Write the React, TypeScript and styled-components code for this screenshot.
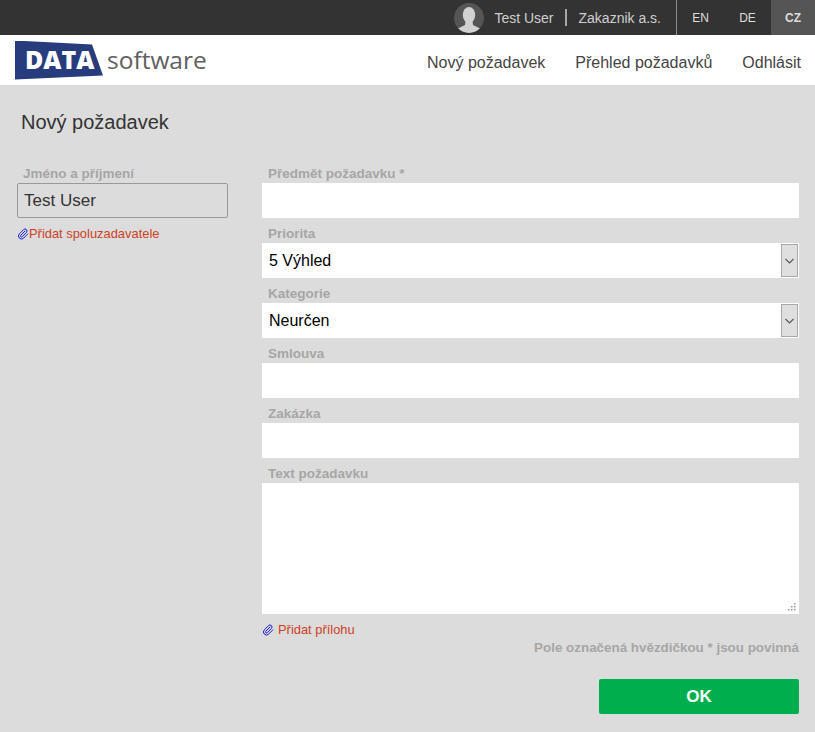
import React from "react";
import styled, { createGlobalStyle } from "styled-components";
import { Paperclip } from "lucide-react";

const GlobalStyle = createGlobalStyle`
  html, body {
    margin: 0;
    padding: 0;
    background: #dcdcdc;
    font-family: "Liberation Sans", Arial, sans-serif;
  }
  * {
    box-sizing: border-box;
  }
`;

const Page = styled.div`
  width: 815px;
  height: 732px;
  overflow: hidden;
  background: #dcdcdc;
`;

const TopBar = styled.div`
  height: 35px;
  background: #333333;
  display: flex;
  justify-content: flex-end;
  align-items: stretch;
`;

const UserBox = styled.div`
  display: flex;
  align-items: center;
  padding-right: 15px;
  border-right: 1px solid #8a8a8a;
  color: #cfcfcf;
  font-size: 14px;
`;

const Avatar = styled.svg`
  width: 30px;
  height: 30px;
  margin-right: 10px;
`;

const Separator = styled.span`
  width: 2px;
  height: 17px;
  background: #a8a8a8;
  margin: 0 12px 0 11px;
`;

const LangItem = styled.a<{ $active?: boolean }>`
  width: 47px;
  display: flex;
  align-items: center;
  justify-content: center;
  font-size: 12px;
  color: #dddddd;
  background: ${(p) => (p.$active ? "#555555" : "transparent")};
  font-weight: ${(p) => (p.$active ? "bold" : "normal")};

  &:last-child {
    width: 44px;
  }
`;

const Header = styled.header`
  height: 50px;
  background: #ffffff;
  display: flex;
  align-items: center;
  justify-content: space-between;
  padding: 0 14px 0 15px;
`;

const Logo = styled.div`
  display: flex;
  align-items: center;
  gap: 4px;
`;

const LogoBadge = styled.span`
  width: 88px;
  height: 39px;
  padding: 0 0 2px 10px;
  display: flex;
  align-items: center;
  background: #273c7d;
  clip-path: polygon(0 0, 77px 4px, 88px 35px, 0 39px);
  color: #ffffff;
  font: 800 25px "Open Sans", sans-serif;
`;

const LogoWord = styled.span`
  padding-bottom: 2px;
  color: #606060;
  font: 400 24.5px "Open Sans", sans-serif;
`;

const Nav = styled.nav`
  display: flex;
  gap: 30px;
  margin-top: 6px;
`;

const NavLink = styled.a`
  font-size: 16px;
  color: #444444;
`;

const Content = styled.main`
  padding: 26px 16px 0 17px;
`;

const Title = styled.h1`
  margin: 0 0 0 4px;
  font-size: 20px;
  line-height: 23px;
  font-weight: normal;
  color: #333333;
`;

const Columns = styled.div`
  display: grid;
  grid-template-columns: 211px 537px;
  column-gap: 34px;
  margin-top: 24px;
`;

const Field = styled.div`
  display: flex;
  flex-direction: column;
`;

const Label = styled.label`
  height: 25px;
  padding: 8px 0 0 6px;
  font-size: 13.5px;
  line-height: 15px;
  font-weight: bold;
  color: #a6a6a6;
`;

const NameInput = styled.input`
  height: 35px;
  width: 100%;
  padding: 0 6px;
  border: 1px solid #999999;
  border-radius: 2px;
  background: #dcdcdc;
  font: 17px "Liberation Sans", Arial, sans-serif;
  color: #333333;
  outline: none;
`;

const TextInput = styled.input`
  height: 35px;
  width: 100%;
  padding: 0 7px;
  border: none;
  background: #ffffff;
  font: 16px "Liberation Sans", Arial, sans-serif;
  outline: none;
`;

const SelectWrap = styled.div`
  position: relative;
  height: 35px;
`;

const Select = styled.select`
  appearance: none;
  width: 100%;
  height: 35px;
  padding: 0 7px;
  border: none;
  border-radius: 0;
  background: #ffffff;
  color: #000000;
  font: 16px "Liberation Sans", Arial, sans-serif;
  outline: none;
`;

const SelectArrow = styled.span`
  position: absolute;
  top: 1px;
  right: 1px;
  width: 17px;
  height: 33px;
  display: flex;
  align-items: center;
  justify-content: center;
  background: #dfdfdf;
  border: 1px solid #a8a8a8;
  pointer-events: none;
`;

const TextAreaWrap = styled.div`
  position: relative;
  height: 131px;
`;

const TextArea = styled.textarea`
  display: block;
  width: 100%;
  height: 131px;
  padding: 7px;
  border: none;
  background: #ffffff;
  font: 16px "Liberation Sans", Arial, sans-serif;
  outline: none;
  resize: none;
`;

const ResizeGrip = styled.svg`
  position: absolute;
  right: 3px;
  bottom: 3px;
  width: 9px;
  height: 9px;
  pointer-events: none;
`;

const AttachLink = styled.a<{ $gap: number }>`
  display: flex;
  align-items: center;
  gap: ${(p) => p.$gap}px;
  height: 15px;
  font-size: 12.9px;
  color: #cc4125;

  svg {
    color: #1a1acc;
    flex: none;
  }
`;

const LeftAttach = styled(AttachLink)`
  margin-top: 8px;
`;

const RightAttach = styled(AttachLink)`
  margin-top: 8px;
`;

const RequiredNote = styled.p`
  margin: 3px 0 0;
  text-align: right;
  font-size: 13.4px;
  line-height: 15px;
  font-weight: bold;
  color: #a6a6a6;
`;

const Actions = styled.div`
  display: flex;
  justify-content: flex-end;
  margin-top: 24px;
`;

const OkButton = styled.button`
  width: 200px;
  height: 35px;
  border: none;
  border-radius: 2px;
  background: #00ae4d;
  color: #ffffff;
  font: bold 17px "Liberation Sans", Arial, sans-serif;
`;

const Arrow = () => (
  <svg width="9" height="6" viewBox="0 0 9 6" fill="none">
    <path d="M0.5 1 L4.5 5 L8.5 1" stroke="#555555" strokeWidth="1.1" />
  </svg>
);

const App: React.FC = () => {
  return (
    <Page>
      <GlobalStyle />
      <TopBar>
        <UserBox>
          <Avatar viewBox="0 0 30 30">
            <defs>
              <clipPath id="avatar-clip">
                <circle cx="15" cy="15" r="15" />
              </clipPath>
            </defs>
            <circle cx="15" cy="15" r="15" fill="#555555" />
            <g clipPath="url(#avatar-clip)" fill="#d2d2d2">
              <ellipse cx="15" cy="12" rx="6.2" ry="8" />
              <path d="M11.5 18 L18.5 18 L19 22 L27 26 L28 30 L2 30 L3 26 L11 22 Z" />
            </g>
          </Avatar>
          Test User
          <Separator />
          Zakaznik a.s.
        </UserBox>
        <LangItem>EN</LangItem>
        <LangItem>DE</LangItem>
        <LangItem $active>CZ</LangItem>
      </TopBar>

      <Header>
        <Logo>
          <LogoBadge>DATA</LogoBadge>
          <LogoWord>software</LogoWord>
        </Logo>
        <Nav>
          <NavLink>Nový požadavek</NavLink>
          <NavLink>Přehled požadavků</NavLink>
          <NavLink>Odhlásit</NavLink>
        </Nav>
      </Header>

      <Content>
        <Title>Nový požadavek</Title>
        <Columns>
          <div>
            <Field>
              <Label>Jméno a příjmení</Label>
              <NameInput defaultValue="Test User" readOnly />
            </Field>
            <LeftAttach $gap={0}>
              <Paperclip size={12} strokeWidth={2} />
              Přidat spoluzadavatele
            </LeftAttach>
          </div>
          <div>
            <Field>
              <Label>Předmět požadavku *</Label>
              <TextInput />
            </Field>
            <Field>
              <Label>Priorita</Label>
              <SelectWrap>
                <Select defaultValue="5 Výhled">
                  <option>5 Výhled</option>
                </Select>
                <SelectArrow>
                  <Arrow />
                </SelectArrow>
              </SelectWrap>
            </Field>
            <Field>
              <Label>Kategorie</Label>
              <SelectWrap>
                <Select defaultValue="Neurčen">
                  <option>Neurčen</option>
                </Select>
                <SelectArrow>
                  <Arrow />
                </SelectArrow>
              </SelectWrap>
            </Field>
            <Field>
              <Label>Smlouva</Label>
              <TextInput />
            </Field>
            <Field>
              <Label>Zakázka</Label>
              <TextInput />
            </Field>
            <Field>
              <Label>Text požadavku</Label>
              <TextAreaWrap>
                <TextArea />
                <ResizeGrip viewBox="0 0 9 9" fill="#9a9a9a">
                  <rect x="7" y="1" width="1.5" height="1.5" />
                  <rect x="4" y="4" width="1.5" height="1.5" />
                  <rect x="7" y="4" width="1.5" height="1.5" />
                  <rect x="1" y="7" width="1.5" height="1.5" />
                  <rect x="4" y="7" width="1.5" height="1.5" />
                  <rect x="7" y="7" width="1.5" height="1.5" />
                </ResizeGrip>
              </TextAreaWrap>
            </Field>
            <RightAttach $gap={4}>
              <Paperclip size={12} strokeWidth={2} />
              Přidat přílohu
            </RightAttach>
            <RequiredNote>Pole označená hvězdičkou * jsou povinná</RequiredNote>
            <Actions>
              <OkButton>OK</OkButton>
            </Actions>
          </div>
        </Columns>
      </Content>
    </Page>
  );
};

export default App;
